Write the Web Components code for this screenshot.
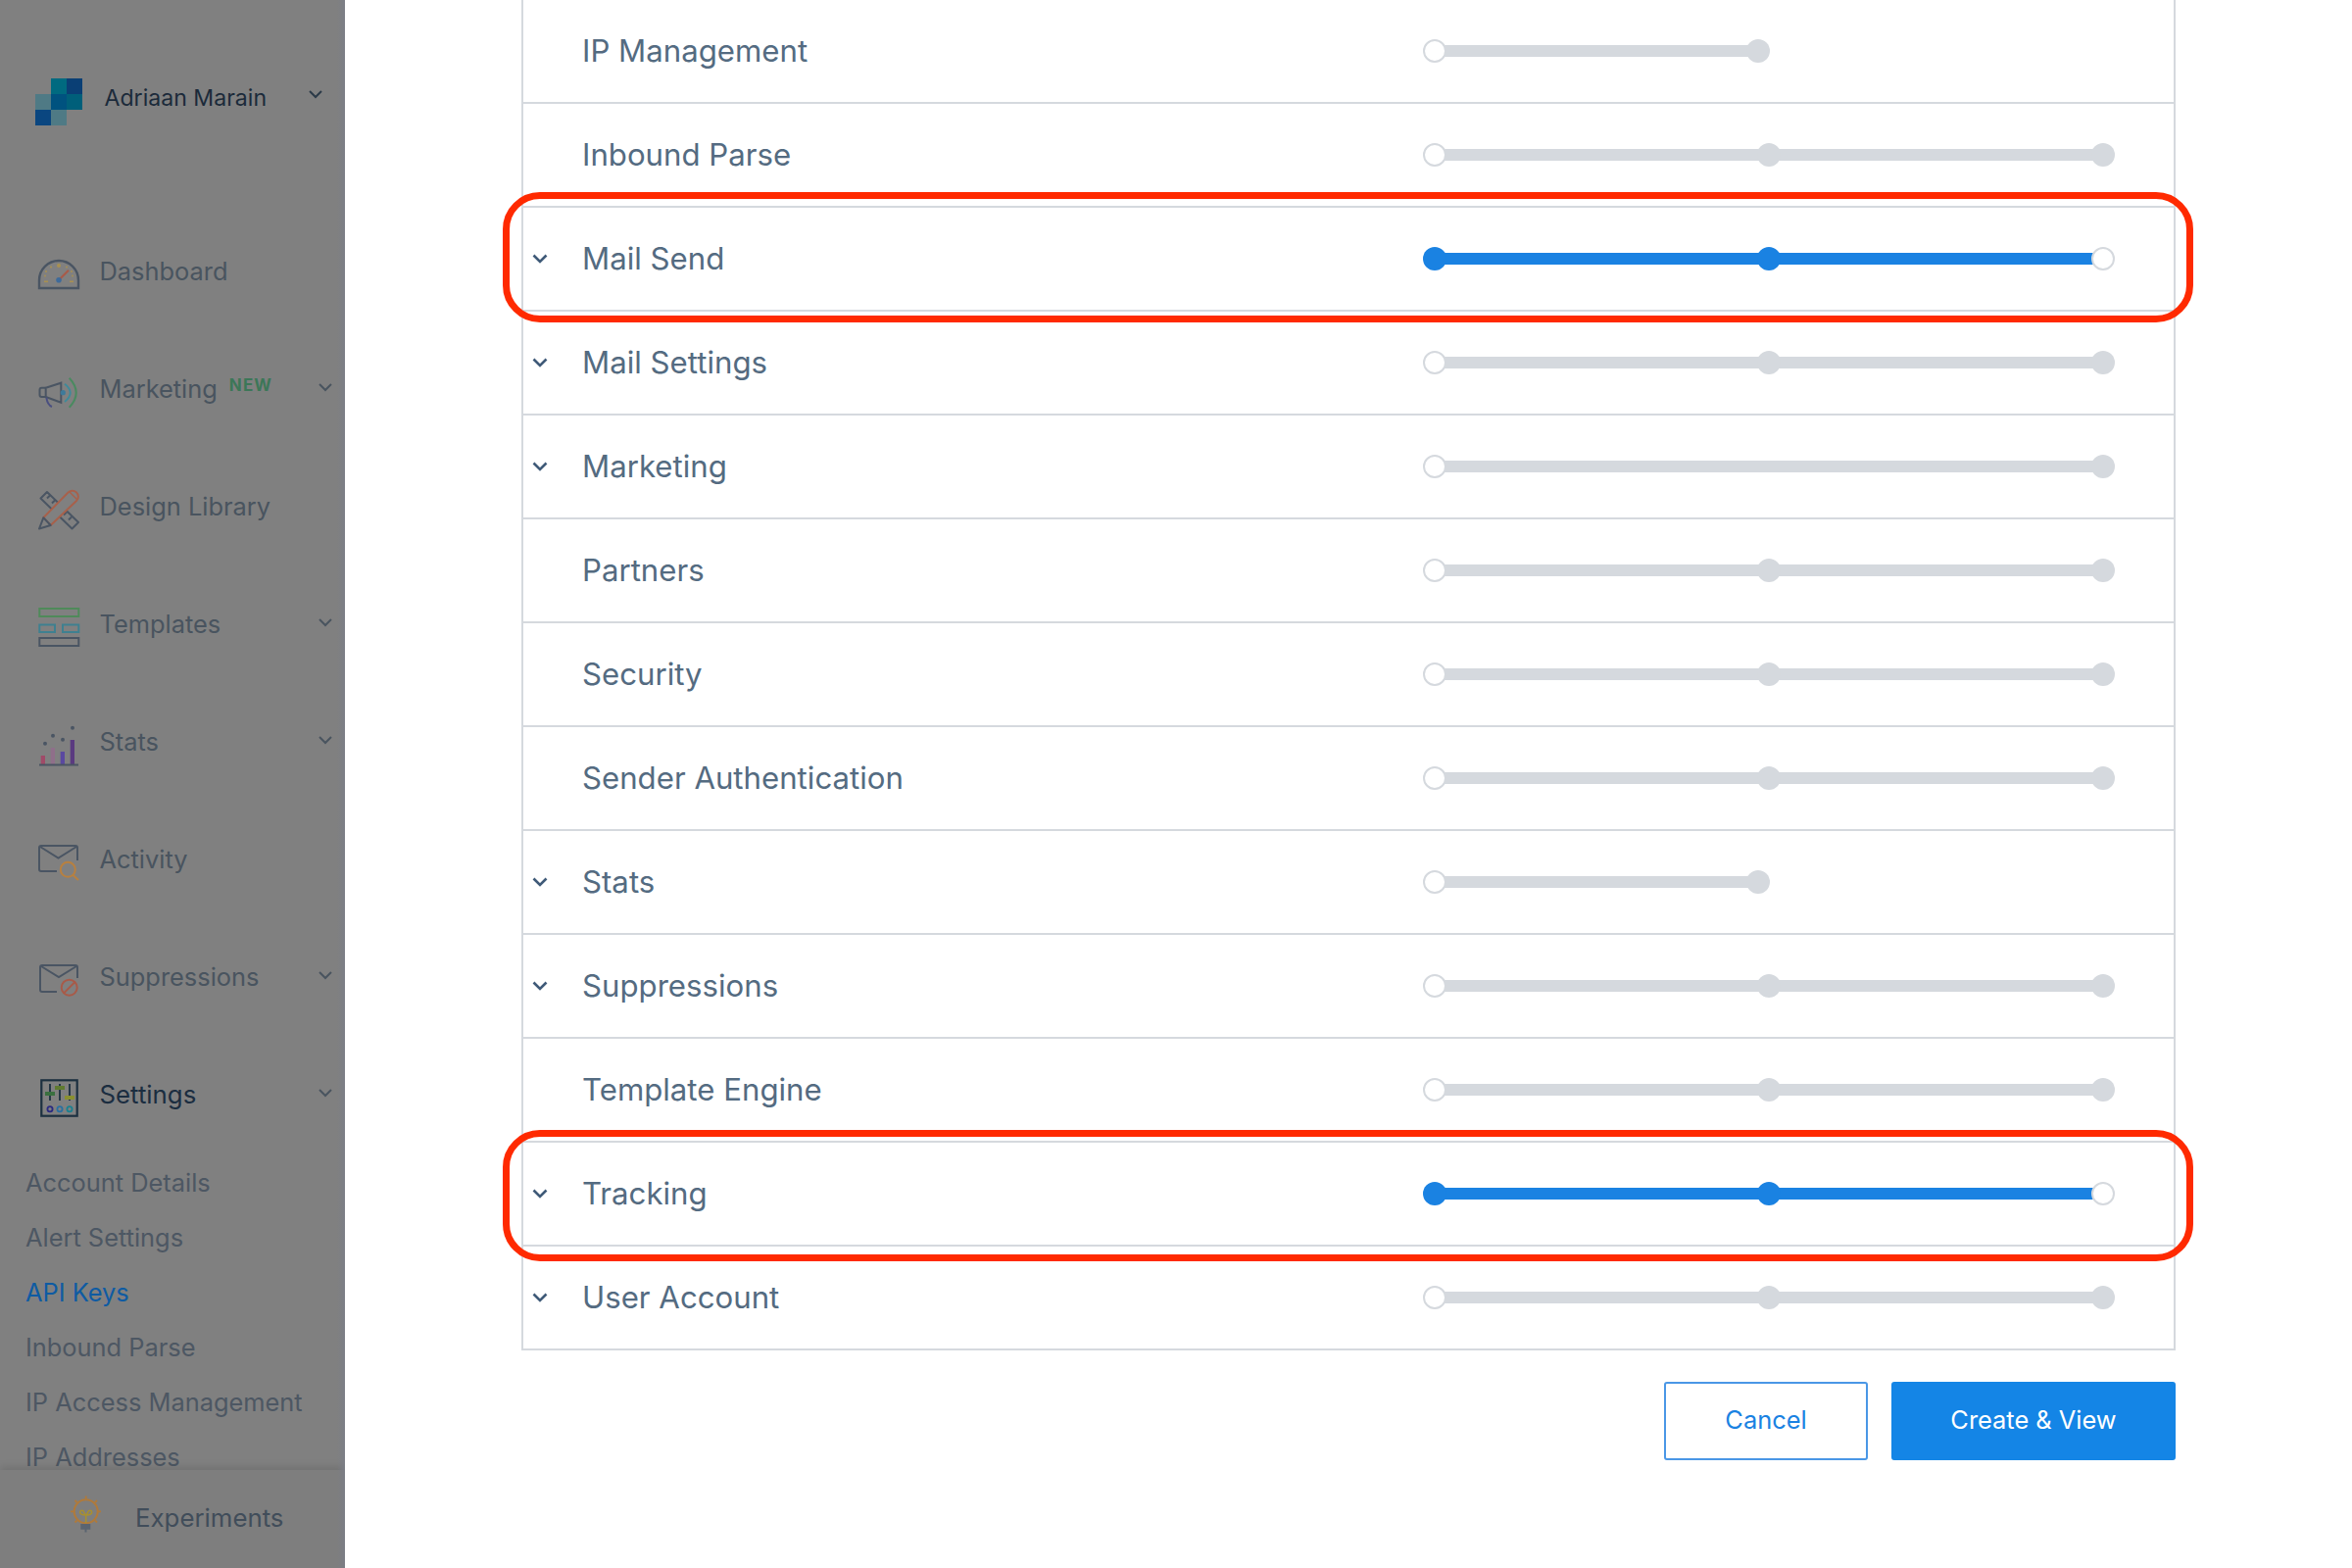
<!DOCTYPE html>
<html lang="en"><head><meta charset="utf-8"><title>API Keys</title>
<style>
html,body{margin:0;height:100%;background:#fff;overflow:hidden}
body{font-family:Inter,"Liberation Sans",sans-serif}
</style></head><body>
<template id="t-shell"><style>
:host{display:grid;grid-template-columns:352px 1fr;height:1600px;overflow:hidden;background:#fff}
main{padding-left:180px;padding-right:180px;min-width:0}
.acts{display:flex;justify-content:flex-end;gap:24px;margin-top:32px}
</style><slot name="side"></slot><main><slot name="table"></slot><div class="acts"><slot name="actions"></slot></div></main></template>

<template id="t-side"><style>
:host{display:flex;flex-direction:column;height:1600px;background:#808080;position:relative;overflow:hidden}
:host::after{content:"";position:absolute;top:0;bottom:0;right:0;width:8px;background:linear-gradient(90deg,rgba(120,125,140,0),rgba(120,125,140,.55));pointer-events:none}
.scroll{flex:1;min-height:0;overflow:hidden}
.foot{flex:none;height:100px;display:flex;align-items:center;padding-left:64px;gap:26px;background:#7e7e7e;box-shadow:0 -3px 8px rgba(0,0,0,.12);position:relative;font-size:25.8px;color:#414d5a}
.foot span{margin-bottom:4px}
.foot ::slotted(svg){margin-top:-2px}
</style><div class="scroll"><slot></slot></div><div class="foot"><slot name="foot-icon"></slot><span><slot name="foot"></slot></span></div></template>

<template id="t-account"><style>
:host{display:flex;height:217px;box-sizing:border-box;padding:80px 23px 0 36px;color:#1b2a3a;font-size:23.1px}
.n{margin-left:22.500px;margin-top:2px;line-height:36px}
.c{margin-left:auto;margin-top:12px}
</style><slot name="logo"></slot><span class="n"><slot></slot></span><svg class="c" width="14" height="9" viewBox="0 0 14 9" fill="none" stroke="#2b3a48" stroke-width="2"><path d="M1 1l6 6 6-6"/></svg></template>

<template id="t-nav"><style>
:host{display:flex;align-items:center;height:120px;padding:0 13px 0 36px;font-size:25.4px;color:#49545f}
:host([current]){color:#1b2d40;font-size:25.8px}
.i{width:48px;height:48px;margin-top:6px;flex:none;display:block}
.l{margin-left:17.500px;margin-bottom:1px}
.b{margin-left:12px;margin-bottom:8px;font-size:17px;font-weight:700;letter-spacing:1.1px;color:#3c7758}
.c{margin-left:auto;margin-bottom:4px;display:none}
:host([chev]) .c{display:block}
.b:empty{display:none}
</style><span class="i"><slot name="icon"></slot></span><span class="l"><slot></slot></span><span class="b"></span><svg class="c" width="14" height="9" viewBox="0 0 14 9" fill="none" stroke="#49545f" stroke-width="2"><path d="M1 1l6 6 6-6"/></svg></template>

<template id="t-sub"><style>
:host{display:flex;align-items:center;height:56px;padding-left:26px;padding-bottom:1px;box-sizing:border-box;font-size:25.4px;color:#4d5763}
:host([active]){color:#0e5ba3}
</style><slot></slot></template>

<template id="t-subs"><style>:host{display:block;margin-top:2px}</style><slot></slot></template>

<template id="t-table"><style>
:host{display:block;border-left:2px solid #d5d9de;border-right:2px solid #d5d9de}
</style><slot></slot></template>

<template id="t-row"><style>
:host{display:grid;grid-template-columns:60px 858px auto;align-items:center;height:106px;box-sizing:border-box;border-bottom:2px solid #d5d9de;position:relative;font-size:31.2px;color:#546b81}
.c{padding-left:9px;display:flex}
.c svg{display:none}
:host([chev]) .c svg{display:block}
.l{margin-bottom:1px}
</style><span class="c"><svg width="16" height="10" viewBox="0 0 16 10" fill="none" stroke="#3f5a78" stroke-width="2.6"><path d="M1.5 1.5L8 8l6.5-6.5"/></svg></span><span class="l"><slot></slot></span><slot name="control"></slot><slot name="mark"></slot></template>

<template id="t-slider"><style>
:host{display:block;width:706px}
:host([half]){width:354px}
.w{display:flex;justify-content:space-between;align-items:center;height:24px;position:relative}
.t{position:absolute;left:12px;right:12px;top:6px;height:12px;background:#d5d9de}
.h{width:24px;height:24px;border-radius:50%;background:#d5d9de;box-sizing:border-box;position:relative}
.h.o{background:#fff;border:2px solid #d5d9de}
:host([on]) .t,:host([on]) .h:not(.o){background:#1a82e2}
</style><div class="w"><div class="t"></div></div></template>

<template id="t-mark"><style>
:host{display:block;position:absolute;left:-21px;right:-20px;top:var(--t,-16px);bottom:var(--b,-13px);border:7px solid #ff2a00;border-radius:38px;pointer-events:none}
</style></template>

<template id="t-btn"><style>
:host{display:flex;align-items:center;justify-content:center;box-sizing:border-box;height:80px;padding-bottom:3px;border-radius:3px;font-size:25.4px;border:2px solid #4a97e6;color:#1a82e2;background:#fff;width:208px}
:host([primary]){background:#1485e6;border-color:#1485e6;color:#fff;width:290px}
</style><slot></slot></template>

<sg-shell>
 <sg-side slot="side">
  <sg-account>
   <svg slot="logo" width="48" height="48" viewBox="0 0 48 48" style="display:block;flex:none"><rect x="16" width="16" height="16" fill="#006a80"/><rect x="32" width="16" height="16" fill="#0a3f75"/><rect y="16" width="16" height="16" fill="#4f7a85"/><rect x="16" y="16" width="16" height="16" fill="#00527f"/><rect x="32" y="16" width="16" height="16" fill="#005f7a"/><rect y="32" width="16" height="16" fill="#0a4680"/><rect x="16" y="32" width="16" height="16" fill="#4f7a85"/></svg>
   Adriaan Marain</sg-account>
  <sg-nav><svg slot="icon" width="48" height="48" viewBox="0 0 48 48" fill="none"><path d="M4 38V30a20 20 0 0 1 40 0v8z" stroke="#4a5563" stroke-width="2.4"/><path d="M24 29.7L34 19.7" stroke="#a85a48" stroke-width="2.2"/><circle cx="24" cy="29.7" r="2.8" fill="#3e6a9a"/><g fill="#a89050"><circle cx="24" cy="15" r="2"/><circle cx="16" cy="16.5" r="1"/><circle cx="32" cy="16.5" r="1"/><circle cx="11" cy="21" r="1"/><circle cx="37" cy="21" r="1"/><rect x="9" y="30.5" width="4" height="1.6"/><rect x="35" y="30.5" width="4" height="1.6"/><circle cx="10" cy="25.5" r=".9"/><circle cx="38" cy="25.5" r=".9"/></g></svg>Dashboard</sg-nav>
  <sg-nav chev badge="NEW"><svg slot="icon" width="48" height="48" viewBox="0 0 48 48" fill="none"><path d="M10.7 19.7L26.3 14.7V34.7L10.7 29z" stroke="#4a5563" stroke-width="2"/><path d="M10.7 19.7H6.5a2 2 0 0 0-2 2V27a2 2 0 0 0 2 2h4.2" stroke="#4a5563" stroke-width="2"/><path d="M11.3 29.7C12 34 14 38 17 39" stroke="#4a4f80" stroke-width="2"/><circle cx="28.3" cy="24.7" r="2.6" fill="#3e7a9a"/><path d="M30 15.7Q41.4 24.7 30 34" stroke="#3e8a9a" stroke-width="2"/><path d="M34.7 9.7Q48.7 24.7 34.7 39.7" stroke="#4a8a60" stroke-width="2"/></svg>Marketing</sg-nav>
  <sg-nav><svg slot="icon" width="48" height="48" viewBox="0 0 48 48" fill="none"><g stroke="#4a5563" stroke-width="2" stroke-linejoin="round"><path d="M5.5 12.5L12 6l32 31-6.500 6.500z"/><path d="M12 12.500l3-3M17 17.500l3-3M29 29.500l3-3M34 34.500l3-3"/></g><path d="M8.300 32.300L33.300 6.700a5.500 5.500 0 0 1 9 8L15.700 40z" fill="#808080" stroke="#a8604a" stroke-width="2" stroke-linejoin="round"/><path d="M35 6l7.500 7.500" stroke="#a8604a" stroke-width="1.500"/><path d="M8.300 32.300L4 43.500l11.700-3.500z" fill="#808080" stroke="#4a5563" stroke-width="2" stroke-linejoin="round"/></svg>Design Library</sg-nav>
  <sg-nav chev><svg slot="icon" width="48" height="48" viewBox="0 0 48 48" fill="none" stroke-width="2"><rect x="4.300" y="5" width="40" height="8" stroke="#4f8a5a"/><rect x="4.300" y="21.500" width="15.700" height="7.500" stroke="#3e8090"/><rect x="28" y="21.500" width="16.300" height="7.500" stroke="#3e8090"/><rect x="4.300" y="35" width="40" height="8" stroke="#4a5563"/></svg>Templates</sg-nav>
  <sg-nav chev><svg slot="icon" width="48" height="48" viewBox="0 0 48 48"><rect x="5.700" y="35" width="4.300" height="9" fill="#a04a68"/><rect x="15.700" y="27" width="4.300" height="17" fill="#8f6f8a"/><rect x="25.700" y="31" width="4.300" height="13" fill="#5a48a0"/><rect x="35.700" y="19" width="4.300" height="25" fill="#5a3a80"/><rect x="4" y="43.500" width="40" height="2" fill="#4a5563"/><g fill="#4a5563"><circle cx="10" cy="22.700" r="2"/><circle cx="18" cy="14.700" r="2"/><circle cx="28" cy="18.700" r="2"/><circle cx="38" cy="6.700" r="2"/></g></svg>Stats</sg-nav>
  <sg-nav><svg slot="icon" width="48" height="48" viewBox="0 0 48 48" fill="none"><path d="M22 33H6a2 2 0 0 1-2-2V9a2 2 0 0 1 2-2h35a2 2 0 0 1 2 2v13M5 8l18.500 11.500L42 8" stroke="#4a5563" stroke-width="2"/><circle cx="33.300" cy="31.300" r="7.500" stroke="#b8803f" stroke-width="2"/><path d="M38.500 37l5.500 5" stroke="#b8803f" stroke-width="2"/></svg>Activity</sg-nav>
  <sg-nav chev><svg slot="icon" width="48" height="48" viewBox="0 0 48 48" fill="none"><path d="M22 36H7a2 2 0 0 1-2-2V11a2 2 0 0 1 2-2h34a2 2 0 0 1 2 2v11M6 10l18 11 18-11" stroke="#4a5563" stroke-width="2"/><circle cx="34.700" cy="31.700" r="8" stroke="#a85a48" stroke-width="2"/><path d="M29 37.500L40.500 26" stroke="#a85a48" stroke-width="2"/></svg>Suppressions</sg-nav>
  <sg-nav chev current><svg slot="icon" width="48" height="48" viewBox="0 0 48 48" fill="none"><rect x="6.300" y="6.300" width="36.400" height="36.400" stroke="#1c3040" stroke-width="2.200"/><path d="M15 10v17M25 10v17M35 10v17" stroke="#1c3040" stroke-width="1.800"/><rect x="10" y="18" width="10" height="4" fill="#3a7040"/><rect x="20" y="12" width="10" height="4" fill="#5f7a30"/><rect x="30" y="22" width="10" height="4" fill="#8a9030"/><circle cx="15" cy="35.700" r="2.600" stroke="#2a2a80" stroke-width="1.800"/><circle cx="25" cy="35.700" r="2.600" stroke="#2a70a0" stroke-width="1.800"/><circle cx="35" cy="35.700" r="2.600" stroke="#1a8090" stroke-width="1.800"/></svg>Settings</sg-nav>
  <sg-subs>
   <sg-sub>Account Details</sg-sub><sg-sub>Alert Settings</sg-sub><sg-sub active>API Keys</sg-sub><sg-sub>Inbound Parse</sg-sub><sg-sub>IP Access Management</sg-sub><sg-sub>IP Addresses</sg-sub>
  </sg-subs>
  <svg slot="foot-icon" width="48" height="48" viewBox="0 0 48 48" fill="none" style="display:block;flex:none"><circle cx="23.700" cy="17.300" r="12" stroke="#b07a3a" stroke-width="2"/><path d="M23.700 1.500v2.800M8 17.300h3M36 17.300h3M12.500 6l2 2M35 6l-2 2M12.500 28.500l2-2M35 28.500l-2-2" stroke="#b07a3a" stroke-width="1.800"/><path d="M23.700 29v-8M23.700 21c-4 0-6-1-6-3s3-2.500 4 0l1.500 3M23.700 21c4 0 6-1 6-3s-3-2.500-4 0l-1.500 3" stroke="#a89030" stroke-width="1.600"/><rect x="18.300" y="30" width="10" height="5.700" fill="#5a6470"/><path d="M23.500 35v3.500" stroke="#5a6470" stroke-width="2"/></svg>
  <span slot="foot">Experiments</span>
 </sg-side>
 <sg-table slot="table">
  <sg-row>IP Management<sg-slider slot="control" half stops="2"></sg-slider></sg-row>
  <sg-row>Inbound Parse<sg-slider slot="control" stops="3"></sg-slider></sg-row>
  <sg-row chev>Mail Send<sg-slider slot="control" stops="3" on></sg-slider><sg-mark slot="mark"></sg-mark></sg-row>
  <sg-row chev>Mail Settings<sg-slider slot="control" stops="3"></sg-slider></sg-row>
  <sg-row chev>Marketing<sg-slider slot="control" stops="2"></sg-slider></sg-row>
  <sg-row>Partners<sg-slider slot="control" stops="3"></sg-slider></sg-row>
  <sg-row>Security<sg-slider slot="control" stops="3"></sg-slider></sg-row>
  <sg-row>Sender Authentication<sg-slider slot="control" stops="3"></sg-slider></sg-row>
  <sg-row chev>Stats<sg-slider slot="control" half stops="2"></sg-slider></sg-row>
  <sg-row chev>Suppressions<sg-slider slot="control" stops="3"></sg-slider></sg-row>
  <sg-row>Template Engine<sg-slider slot="control" stops="3"></sg-slider></sg-row>
  <sg-row chev>Tracking<sg-slider slot="control" stops="3" on></sg-slider><sg-mark slot="mark" style="--t:-13px;--b:-17px"></sg-mark></sg-row>
  <sg-row chev>User Account<sg-slider slot="control" stops="3"></sg-slider></sg-row>
 </sg-table>
 <sg-btn slot="actions">Cancel</sg-btn>
 <sg-btn slot="actions" primary>Create &amp; View</sg-btn>
</sg-shell>
<script>
function def(tag,tpl,init){customElements.define(tag,class extends HTMLElement{constructor(){super();const r=this.attachShadow({mode:'open'});r.appendChild(document.getElementById(tpl).content.cloneNode(true));}connectedCallback(){if(init)init(this,this.shadowRoot);}});}
def('sg-shell','t-shell');def('sg-side','t-side');def('sg-account','t-account');
def('sg-nav','t-nav',(h,r)=>{r.querySelector('.b').textContent=h.getAttribute('badge')||'';});
def('sg-sub','t-sub');def('sg-subs','t-subs');def('sg-table','t-table');def('sg-row','t-row');def('sg-mark','t-mark');def('sg-btn','t-btn');
def('sg-slider','t-slider',(h,r)=>{const w=r.querySelector('.w');if(w.querySelector('.h'))return;const n=+h.getAttribute('stops');const on=h.hasAttribute('on');for(let i=0;i<n;i++){const d=document.createElement('div');d.className='h'+((on?i===n-1:i===0)?' o':'');w.appendChild(d);}});
</script>
</body></html>
